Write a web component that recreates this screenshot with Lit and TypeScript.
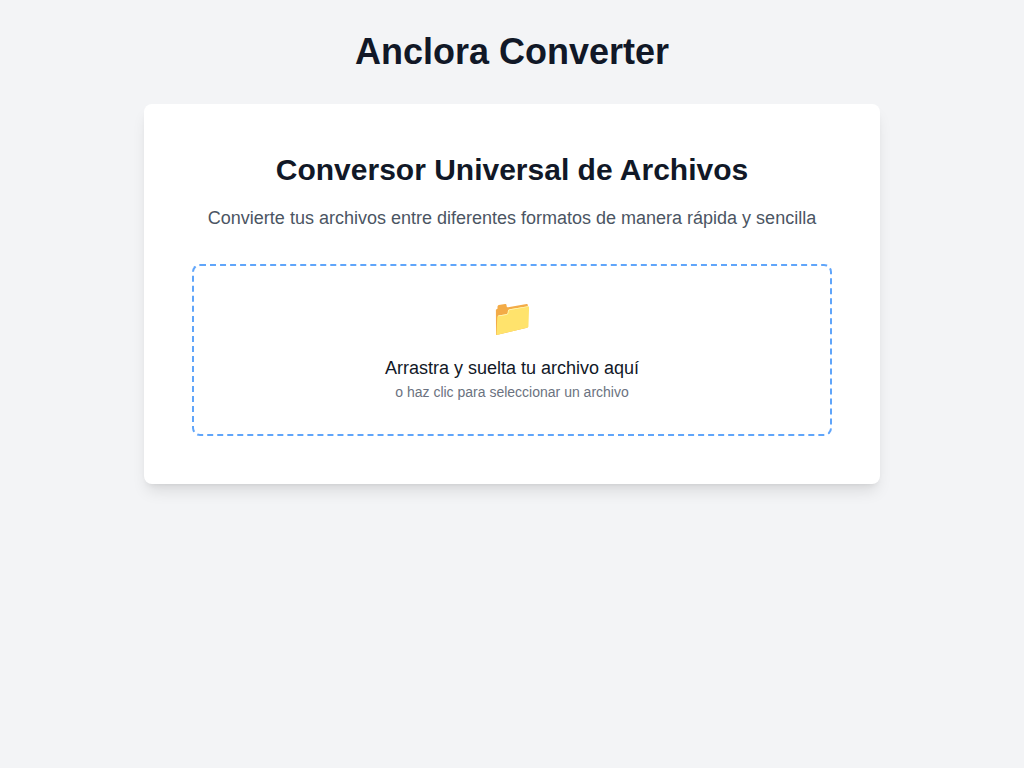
import { LitElement, html, css } from "lit";
import { customElement, state } from "lit/decorators.js";

@customElement("app-root")
export class AppRoot extends LitElement {
  static styles = css`
    :host {
      display: block;
      min-height: 100vh;
      background: #f3f4f6;
      color: #111827;
      font-family: "Liberation Sans", Arial, sans-serif;
      line-height: 24px;
    }
    *, *::before, *::after { box-sizing: border-box; }
    h1, h2, p { margin: 0; }
    .page { padding: 32px 16px; }
    .brand {
      margin-bottom: 32px;
      font-size: 36px;
      line-height: 40px;
      font-weight: 700;
      text-align: center;
    }
    .column { max-width: 768px; margin: 0 auto; padding: 0 16px; }
    .card {
      padding: 48px;
      border-radius: 8px;
      background: #fff;
      text-align: center;
      box-shadow: 0 10px 15px -3px rgb(0 0 0 / 0.1), 0 4px 6px -4px rgb(0 0 0 / 0.1);
    }
    .title { margin-bottom: 16px; font-size: 30px; line-height: 36px; font-weight: 700; }
    .lead { margin-bottom: 32px; font-size: 18px; line-height: 28px; color: #4b5563; }
    .drop {
      display: block;
      padding: 32px;
      border: 2px dashed #60a5fa;
      border-radius: 8px;
      cursor: pointer;
    }
    .file {
      position: absolute;
      width: 1px;
      height: 1px;
      opacity: 0;
    }
    .file:focus-visible + .drop { background: #eff6ff; }
    .icon { display: block; margin-bottom: 16px; font-size: 36px; line-height: 40px; }
    .prompt { display: block; font-size: 18px; line-height: 28px; }
    .hint { display: block; font-size: 14px; line-height: 20px; color: #6b7280; }
  `;

  @state() private fileName = "";

  private pick(e: Event) {
    this.fileName = (e.target as HTMLInputElement).files?.[0]?.name ?? "";
  }

  private drop(e: DragEvent) {
    e.preventDefault();
    this.fileName = e.dataTransfer?.files[0]?.name ?? "";
  }

  render() {
    return html`
      <main class="page">
        <h1 class="brand">Anclora Converter</h1>
        <div class="column">
          <section class="card">
            <h2 class="title">Conversor Universal de Archivos</h2>
            <p class="lead">Convierte tus archivos entre diferentes formatos de manera rápida y sencilla</p>
            <input class="file" id="file" type="file" @change=${this.pick} />
            <label class="drop" for="file" @dragover=${(e: Event) => e.preventDefault()} @drop=${this.drop}>
              <span class="icon" aria-hidden="true">📁</span>
              <span class="prompt">${this.fileName || "Arrastra y suelta tu archivo aquí"}</span>
              <span class="hint">o haz clic para seleccionar un archivo</span>
            </label>
          </section>
        </div>
      </main>
    `;
  }
}
